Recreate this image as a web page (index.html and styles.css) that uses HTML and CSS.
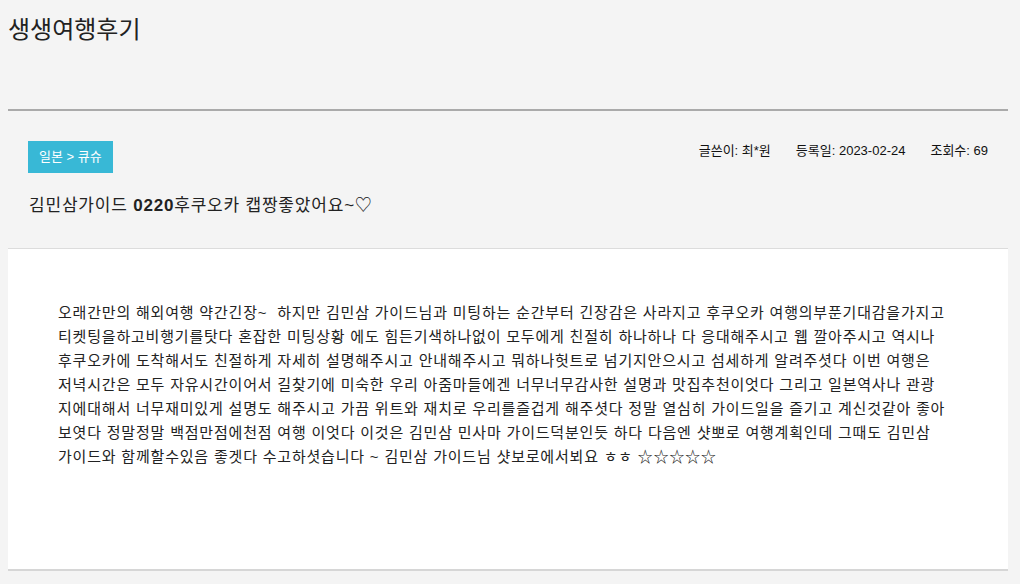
FILE: index.html
```html
<!DOCTYPE html>
<html lang="ko">
<head>
    <meta charset="UTF-8">
    <meta name="viewport" content="width=device-width, initial-scale=1.0">
    <title>생생여행후기</title>
    <link rel="stylesheet" href="styles.css">
</head>
<body>
    <div class="wrap">
        <div class="page-head">
            <h1>생생여행후기</h1>
        </div>

        <div class="view-head">
            <div class="view-top">
                <span class="badge">일본 &gt; 큐슈</span>
                <ul class="meta">
                    <li>글쓴이: 최*원</li>
                    <li>등록일: 2023-02-24</li>
                    <li>조회수: 69</li>
                </ul>
            </div>
            <h2 class="view-title">김민삼가이드 <b>0220</b>후쿠오카 캡짱좋았어요~♡</h2>
        </div>

        <div class="view-body">
            <p>
                오래간만의 해외여행 약간긴장~&nbsp; 하지만 김민삼 가이드님과 미팅하는 순간부터 긴장감은 사라지고 후쿠오카 여행의부푼기대감을가지고<br>
                티켓팅을하고비행기를탓다 혼잡한 미팅상황 에도 힘든기색하나없이 모두에게 친절히 하나하나 다 응대해주시고 웹 깔아주시고 역시나<br>
                후쿠오카에 도착해서도 친절하게 자세히 설명해주시고 안내해주시고 뭐하나헛트로 넘기지안으시고 섬세하게 알려주셧다 이번 여행은<br>
                저녁시간은 모두 자유시간이어서 길찾기에 미숙한 우리 아줌마들에겐 너무너무감사한 설명과 맛집추천이엇다 그리고 일본역사나 관광<br>
                지에대해서 너무재미있게 설명도 해주시고 가끔 위트와 재치로 우리를즐겁게 해주셧다 정말 열심히 가이드일을 즐기고 계신것같아 좋아<br>
                보엿다 정말정말 백점만점에천점 여행 이엇다 이것은 김민삼 민사마 가이드덕분인듯 하다 다음엔 샷뽀로 여행계획인데 그때도 김민삼<br>
                가이드와 함께할수있음 좋겟다 수고하셧습니다 ~ 김민삼 가이드님 샷보로에서뵈요 ㅎㅎ ☆☆☆☆☆
            </p>
        </div>
    </div>
</body>
</html>
```

FILE: styles.css
```css
* {
    margin: 0;
    padding: 0;
    box-sizing: border-box;
}

body {
    background-color: #f4f4f4;
    color: #222;
    font-family: 'Liberation Sans', 'Noto Sans CJK KR', sans-serif;
    padding: 0 8px;
}

.wrap {
    width: 1000px;
}

.page-head {
    height: 111px;
    padding-top: 14px;
    border-bottom: 2px solid #aaa;
}

.page-head h1 {
    font-size: 24px;
    font-weight: normal;
    line-height: 32px;
    color: #222;
}

.view-head {
    padding: 30px 20px 0 20px;
    height: 138px;
    border-bottom: 1px solid #dcdcdc;
}

.view-top {
    display: flex;
    justify-content: space-between;
    align-items: flex-start;
}

.badge {
    display: inline-block;
    background-color: #38b8d6;
    color: #fff;
    font-size: 13px;
    line-height: 32px;
    padding: 0 11px;
}

.meta {
    list-style: none;
    display: flex;
    gap: 25px;
    font-size: 13px;
    line-height: 20px;
    color: #111;
}

.view-title {
    font-size: 17px;
    font-weight: normal;
    letter-spacing: 0.8px;
    margin-top: 20px;
    padding-left: 1px;
    line-height: 26px;
    color: #222;
}

.view-title b {
    font-weight: bold;
}

.view-body {
    background-color: #fff;
    border-bottom: 2px solid #d6d6d6;
    padding: 52px 40px 100px 50px;
    height: 322px;
}

.view-body p {
    font-size: 15px;
    letter-spacing: 0.8px;
    line-height: 24px;
    color: #222;
    white-space: nowrap;
}
```
